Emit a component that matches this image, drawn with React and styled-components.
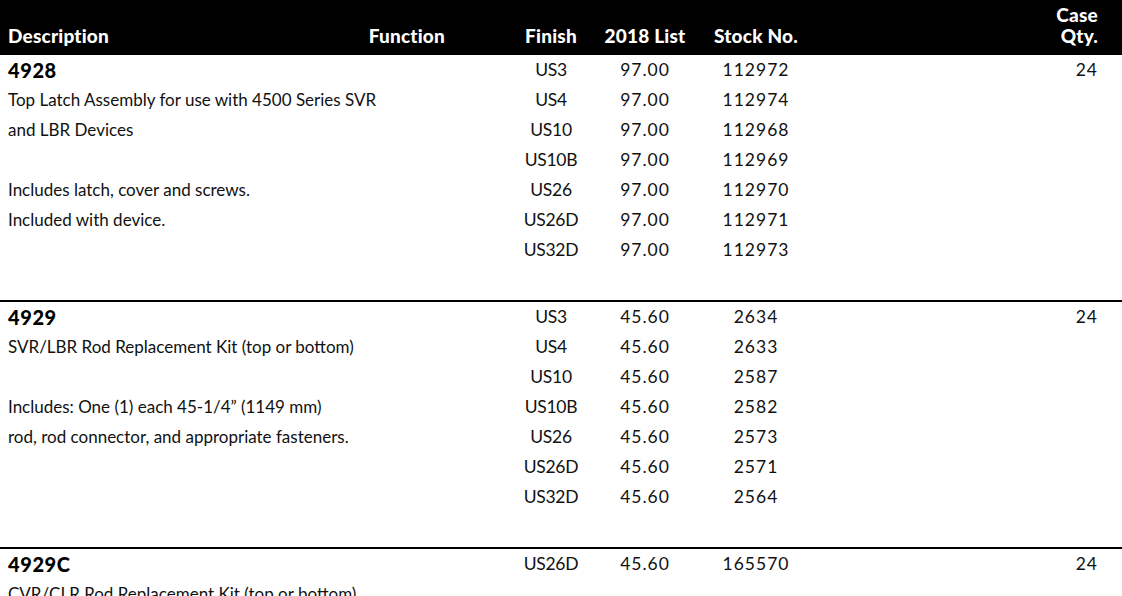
import React from 'react';
import styled, { createGlobalStyle } from 'styled-components';

const GlobalStyle = createGlobalStyle`
  html, body {
    margin: 0;
    padding: 0;
    background: #fff;
  }
  body {
    font-family: Lato, "Liberation Sans", Arial, sans-serif;
    color: #111;
    overflow: hidden;
  }
`;

const Page = styled.div`
  width: 1122px;
  height: 596px;
  overflow: hidden;
`;

const Header = styled.div`
  height: 55px;
  box-sizing: border-box;
  background: #000;
  color: #fff;
  display: flex;
  align-items: flex-end;
  padding: 0 24px 9px 8px;
  font-weight: 900;
  font-size: 19px;
  line-height: 21px;
  letter-spacing: 0.2px;
`;

const HeadDesc = styled.div`
  width: 497px;
  display: flex;
  justify-content: space-between;
  padding-right: 60px;
  box-sizing: border-box;
`;

const Cols = styled.div`
  flex: 1;
  display: grid;
  grid-template-columns: 92px 96px 126px 1fr;
  align-items: end;
`;

const HeadCell = styled.div`
  text-align: ${p => (p.$right ? 'right' : 'center')};
`;

const Block = styled.div`
  display: flex;
  align-items: flex-start;
  padding: 0 24px 35px 8px;
  border-bottom: 2px solid #000;
`;

const Desc = styled.div`
  width: 497px;
  flex-shrink: 0;
  font-size: 17px;
  line-height: 30px;
`;

const ItemNo = styled.div`
  font-weight: 900;
  font-size: 20px;
  letter-spacing: 0.6px;
  color: #000;
`;

const Line = styled.div`
  height: 30px;
  white-space: nowrap;
`;

const Rows = styled.div`
  flex: 1;
  display: flex;
  flex-direction: column;
`;

const Row = styled.div`
  display: grid;
  grid-template-columns: 92px 96px 126px 1fr;
  height: 30px;
  line-height: 30px;
  font-size: 17.5px;
`;

const Cell = styled.div`
  text-align: ${p => (p.$right ? 'right' : 'center')};
  letter-spacing: ${p => (p.$num ? '1px' : '-0.3px')};
`;

const items = [
  {
    no: '4928',
    price: '97.00',
    qty: '24',
    lines: [
      'Top Latch Assembly for use with 4500 Series SVR',
      'and LBR Devices',
      '',
      'Includes latch, cover and screws.',
      'Included with device.',
    ],
    finishes: [
      ['US3', '112972'],
      ['US4', '112974'],
      ['US10', '112968'],
      ['US10B', '112969'],
      ['US26', '112970'],
      ['US26D', '112971'],
      ['US32D', '112973'],
    ],
  },
  {
    no: '4929',
    price: '45.60',
    qty: '24',
    lines: [
      'SVR/LBR Rod Replacement Kit (top or bottom)',
      '',
      'Includes: One (1) each 45-1/4\u201D (1149 mm)',
      'rod, rod connector, and appropriate fasteners.',
    ],
    finishes: [
      ['US3', '2634'],
      ['US4', '2633'],
      ['US10', '2587'],
      ['US10B', '2582'],
      ['US26', '2573'],
      ['US26D', '2571'],
      ['US32D', '2564'],
    ],
  },
  {
    no: '4929C',
    price: '45.60',
    qty: '24',
    lines: ['CVR/CLR Rod Replacement Kit (top or bottom)'],
    finishes: [['US26D', '165570']],
  },
];

const ItemBlock = ({ item }) => (
  <Block>
    <Desc>
      <ItemNo>{item.no}</ItemNo>
      {item.lines.map((text, i) => (
        <Line key={i}>{text}</Line>
      ))}
    </Desc>
    <Rows>
      {item.finishes.map(([finish, stock], i) => (
        <Row key={finish}>
          <Cell>{finish}</Cell>
          <Cell $num>{item.price}</Cell>
          <Cell $num>{stock}</Cell>
          <Cell $right $num>{i === 0 ? item.qty : ''}</Cell>
        </Row>
      ))}
    </Rows>
  </Block>
);

const App = () => (
  <Page>
    <GlobalStyle />
    <Header>
      <HeadDesc>
        <span>Description</span>
        <span>Function</span>
      </HeadDesc>
      <Cols>
        <HeadCell>Finish</HeadCell>
        <HeadCell>2018 List</HeadCell>
        <HeadCell>Stock No.</HeadCell>
        <HeadCell $right>
          Case
          <br />
          Qty.
        </HeadCell>
      </Cols>
    </Header>
    {items.map(item => (
      <ItemBlock key={item.no} item={item} />
    ))}
  </Page>
);

export default App;
